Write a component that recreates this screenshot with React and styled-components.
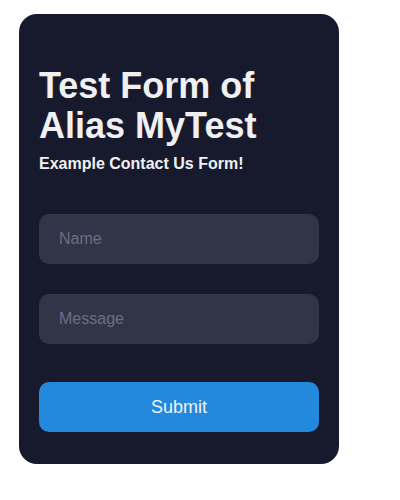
import React from "react";
import styled, { createGlobalStyle } from "styled-components";

const GlobalStyle = createGlobalStyle`
  body {
    margin: 0;
    background: #ffffff;
    font-family: "Liberation Sans", Arial, sans-serif;
  }
`;

const Page = styled.div`
  padding: 14px 0 0 19px;
`;

const Card = styled.form`
  display: flex;
  flex-direction: column;
  width: 320px;
  box-sizing: border-box;
  padding: 52px 20px 32px;
  background-color: #171a2d;
  border-radius: 18px;
`;

const Title = styled.h1`
  margin: 0;
  font-size: 36px;
  line-height: 40px;
  font-weight: bold;
  color: #f0f0f2;
`;

const Subtitle = styled.p`
  margin: 9px 0 0;
  font-size: 16px;
  font-weight: bold;
  color: #f0f0f2;
`;

const Fields = styled.div`
  display: flex;
  flex-direction: column;
  gap: 30px;
  margin-top: 41px;
`;

const Input = styled.input`
  height: 50px;
  box-sizing: border-box;
  padding: 0 20px;
  border: none;
  outline: none;
  border-radius: 10px;
  background-color: #323447;
  color: #e6e6ea;
  font-family: inherit;
  font-size: 16px;

  &::placeholder {
    color: #6c6e86;
  }
`;

const SubmitButton = styled.button`
  height: 50px;
  margin-top: 38px;
  border: none;
  border-radius: 10px;
  background-color: #2389dd;
  color: #f2f2f4;
  font-family: inherit;
  font-size: 18px;
  cursor: pointer;
`;

function App() {
  return (
    <>
      <GlobalStyle />
      <Page>
        <Card onSubmit={(e) => e.preventDefault()}>
          <Title>Test Form of Alias MyTest</Title>
          <Subtitle>Example Contact Us Form!</Subtitle>
          <Fields>
            <Input type="text" placeholder="Name" />
            <Input type="text" placeholder="Message" />
          </Fields>
          <SubmitButton type="submit">Submit</SubmitButton>
        </Card>
      </Page>
    </>
  );
}

export default App;
